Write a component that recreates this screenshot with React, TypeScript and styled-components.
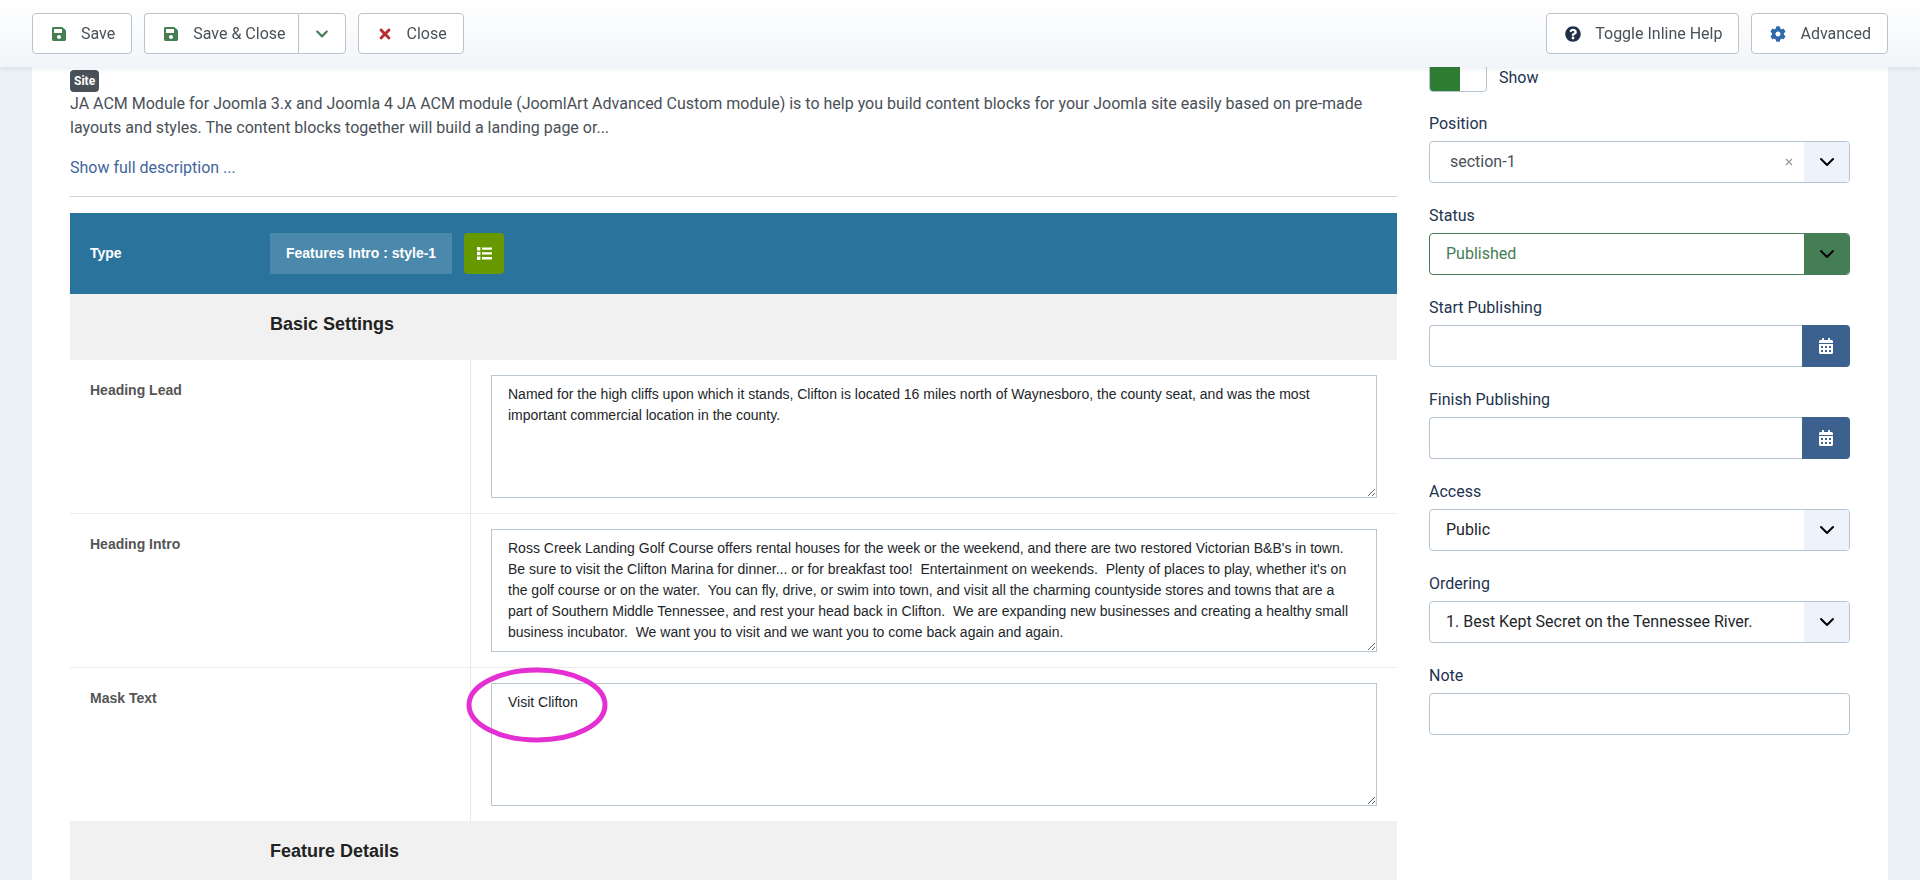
import React, { useId, useState } from "react";
import styled, { createGlobalStyle } from "styled-components";
import {
  FaCalendarAlt,
  FaChevronDown,
  FaCog,
  FaQuestionCircle,
  FaSave,
  FaTimes,
} from "react-icons/fa";

const color = {
  page: "#ebf1f6",
  text: "#495057",
  label: "#22334f",
  border: "#b6c5d3",
  buttonBorder: "#bcc3cb",
  success: "#457d54",
  danger: "#b92d30",
  primary: "#3d618f",
  link: "#3f659c",
};

const GlobalStyle = createGlobalStyle`
  *, *::before, *::after { box-sizing: border-box; }
  html { scrollbar-width: none; }
  body {
    margin: 0;
    background: ${color.page};
    color: ${color.text};
    font: 400 16px/24px Roboto, "Liberation Sans", sans-serif;
  }
  button, input, select, textarea { font: inherit; margin: 0; }
`;

/* Toolbar */

const Toolbar = styled.header`
  position: fixed;
  z-index: 10;
  top: 0;
  left: 0;
  right: 0;
  display: flex;
  gap: 12px;
  height: 67px;
  padding: 13px 32px;
  background: linear-gradient(#ffffff, #f2f5f9);
  box-shadow: 0 1px 6px rgba(40, 60, 90, 0.12);
`;

const Spacer = styled.div`
  flex: 1;
`;

const ToolButton = styled.button`
  display: flex;
  align-items: center;
  gap: 12px;
  padding: 0 16px;
  height: 41px;
  border: 1px solid ${color.buttonBorder};
  border-radius: 4px;
  background: #fff;
  color: ${color.text};
  white-space: nowrap;
`;

const IconSlot = styled.span<{ $tone: string }>`
  display: flex;
  justify-content: center;
  width: 20px;
  color: ${(p) => p.$tone};
`;

const SplitButton = styled.div`
  display: flex;

  ${ToolButton}:first-child {
    padding-right: 12px;
    border-right: 0;
    border-radius: 4px 0 0 4px;
  }
  ${ToolButton}:last-child {
    padding: 0 13px;
    border-radius: 0 4px 4px 0;
  }
`;

/* Page */

const Card = styled.main`
  display: grid;
  grid-template-columns: minmax(0, 1fr) minmax(280px, 421px);
  gap: 32px;
  min-height: 100vh;
  margin: 0 32px;
  padding: 64px 38px 0;
  background: #fff;
`;

const Content = styled.section`
  padding-top: 6px;
`;

const Badge = styled.span`
  display: block;
  width: fit-content;
  padding: 0 4px;
  border-radius: 4px;
  background: ${color.text};
  color: #fff;
  font-size: 12px;
  font-weight: 700;
  line-height: 22px;
`;

const Description = styled.p`
  margin: 0 0 16px;
`;

const DescriptionLink = styled.a`
  color: ${color.link};
  text-decoration: none;
`;

const Divider = styled.hr`
  margin: 16px 0;
  border: 0;
  border-top: 1px solid #d0d3d6;
`;

const ModuleForm = styled.form`
  font-family: "Liberation Sans", Arial, sans-serif;
  font-size: 14px;
  line-height: 21px;
`;

const TypeBar = styled.div`
  display: flex;
  align-items: center;
  height: 81px;
  padding: 0 20px;
  background: #2a739d;
  color: #fff;
  font-weight: 700;
`;

const TypeLabel = styled.span`
  width: 180px;
`;

const TypeValue = styled.span`
  padding: 10px 16px;
  margin-right: 12px;
  background: #4a88ac;
`;

const TypeButton = styled.button`
  display: flex;
  align-items: center;
  justify-content: center;
  width: 40px;
  height: 41px;
  padding: 0;
  border: 0;
  border-radius: 4px;
  background: #690;
  color: #fff;
`;

const SectionHeading = styled.h3`
  height: 66px;
  margin: 0;
  padding: 18px 0 0 200px;
  background: #f1f1f1;
  color: #222;
  font-size: 18px;
  line-height: 24px;
`;

const Row = styled.div`
  display: grid;
  grid-template-columns: 400px minmax(0, 1fr);

  & + & {
    border-top: 1px solid #ebebeb;
  }
`;

const RowLabel = styled.label`
  padding: 20px;
  color: #555;
  font-weight: 700;
`;

const RowField = styled.div`
  position: relative;
  display: flex;
  padding: 15px 20px;
  border-left: 1px solid #e8e8e8;
`;

const TextArea = styled.textarea`
  width: 100%;
  height: 123px;
  padding: 8px 16px;
  border: 1px solid #b9c6cf;
  border-radius: 0;
  background: #fff;
  color: #22262a;
  resize: both;
`;

const Marker = styled.svg`
  position: absolute;
  top: -1px;
  left: -5px;
  width: 142px;
  height: 76px;
  pointer-events: none;
`;

/* Sidebar */

const Sidebar = styled.aside`
  display: flex;
  flex-direction: column;
  gap: 21px;
  color: ${color.label};
`;

const SwitchLabel = styled.label`
  display: flex;
  align-items: center;
  gap: 12px;
  height: 28px;
`;

const Switch = styled.input`
  appearance: none;
  width: 58px;
  height: 28px;
  border: 1px solid ${color.border};
  border-radius: 4px;
  background: linear-gradient(#2f7d32, #2f7d32) right / 30px 100% no-repeat #fff;

  &:checked {
    background-position: left;
  }
`;

const Group = styled.div`
  display: flex;
  flex-direction: column;
  gap: 5px;

  ${SwitchLabel} + & {
    margin-top: -1px;
  }
`;

const ControlWrap = styled.div`
  position: relative;
  display: flex;
`;

const TextInput = styled.input`
  flex: 1;
  min-width: 0;
  height: 42px;
  padding: 0 16px;
  border: 1px solid ${color.border};
  border-radius: 4px;
  background: #fff;
  color: #22262a;
`;

const CalendarButton = styled.button`
  display: flex;
  align-items: center;
  justify-content: center;
  width: 48px;
  height: 42px;
  padding: 0;
  border: 0;
  border-radius: 0 4px 4px 0;
  background: ${color.primary};
  color: #fff;
`;

const DateWrap = styled(ControlWrap)`
  ${TextInput} {
    border-right: 0;
    border-radius: 4px 0 0 4px;
  }
`;

type Tone = "default" | "muted" | "success";

const Select = styled.select<{ $tone: Tone }>`
  appearance: none;
  width: 100%;
  height: 42px;
  padding: 0 60px 0 ${(p) => (p.$tone === "muted" ? 20 : 16)}px;
  border: 1px solid ${(p) => (p.$tone === "success" ? color.success : color.border)};
  border-radius: 4px;
  background: #fff;
  color: ${(p) =>
    ({ default: "#22262a", muted: color.text, success: color.success })[p.$tone]};
`;

const Arrow = styled.span<{ $tone: Tone }>`
  position: absolute;
  top: 1px;
  right: 1px;
  bottom: 1px;
  display: flex;
  align-items: center;
  justify-content: center;
  width: 45px;
  border-radius: 0 3px 3px 0;
  background: ${(p) => (p.$tone === "success" ? color.success : "#eef3fb")};
  pointer-events: none;
`;

const ClearButton = styled.button`
  position: absolute;
  top: 1px;
  right: 46px;
  bottom: 1px;
  display: flex;
  align-items: center;
  justify-content: center;
  width: 30px;
  padding: 0;
  border: 0;
  background: none;
`;

function SelectField(props: {
  label: string;
  options: string[];
  tone?: Tone;
  clearable?: boolean;
}) {
  const id = useId();
  const tone = props.tone ?? "default";
  const [value, setValue] = useState(props.options[0]);
  return (
    <Group>
      <label htmlFor={id}>{props.label}</label>
      <ControlWrap>
        <Select id={id} $tone={tone} value={value} onChange={(e) => setValue(e.target.value)}>
          {props.clearable && <option value="" />}
          {props.options.map((o) => (
            <option key={o}>{o}</option>
          ))}
        </Select>
        {props.clearable && (
          <ClearButton type="button" aria-label="Clear position" onClick={() => setValue("")}>
            <svg width="8" height="8" viewBox="0 0 8 8" stroke="#999" strokeWidth="1.2">
              <path d="M1 1l6 6M7 1l-6 6" />
            </svg>
          </ClearButton>
        )}
        <Arrow $tone={tone}>
          <svg width="16" height="10" viewBox="0 0 16 10" fill="none" stroke="#000" strokeWidth="2" strokeLinecap="round" strokeLinejoin="round">
            <path d="M2 2l6 6 6-6" />
          </svg>
        </Arrow>
      </ControlWrap>
    </Group>
  );
}

function DateField({ label }: { label: string }) {
  const id = useId();
  return (
    <Group>
      <label htmlFor={id}>{label}</label>
      <DateWrap>
        <TextInput id={id} type="text" />
        <CalendarButton type="button" aria-label={`Open calendar for ${label}`}>
          <FaCalendarAlt size={16} />
        </CalendarButton>
      </DateWrap>
    </Group>
  );
}

function TextRow(props: { label: string; text: string; marked?: boolean }) {
  const id = useId();
  return (
    <Row>
      <RowLabel htmlFor={id}>{props.label}</RowLabel>
      <RowField>
        <TextArea id={id} defaultValue={props.text} spellCheck={false} />
        {props.marked && (
          <Marker viewBox="0 0 142 76" fill="none" stroke="#e42fd3" strokeWidth="5" aria-hidden="true">
            <ellipse cx="71" cy="38" rx="68" ry="35" />
          </Marker>
        )}
      </RowField>
    </Row>
  );
}

function Tool(props: { icon: React.ReactNode; tone: string; children: string }) {
  return (
    <ToolButton type="button">
      <IconSlot $tone={props.tone}>{props.icon}</IconSlot>
      {props.children}
    </ToolButton>
  );
}

const headingLead =
  "Named for the high cliffs upon which it stands, Clifton is located 16 miles north of Waynesboro, the county seat, and was the most important commercial location in the county.";

const headingIntro =
  "Ross Creek Landing Golf Course offers rental houses for the week or the weekend, and there are two restored Victorian B&B's in town.  Be sure to visit the Clifton Marina for dinner... or for breakfast too!  Entertainment on weekends.  Plenty of places to play, whether it's on the golf course or on the water.  You can fly, drive, or swim into town, and visit all the charming countyside stores and towns that are a part of Southern Middle Tennessee, and rest your head back in Clifton.  We are expanding new businesses and creating a healthy small business incubator.  We want you to visit and we want you to come back again and again.";

export default function App() {
  return (
    <>
      <GlobalStyle />
      <Toolbar>
        <Tool icon={<FaSave size={16} />} tone={color.success}>Save</Tool>
        <SplitButton>
          <Tool icon={<FaSave size={16} />} tone={color.success}>{"Save & Close"}</Tool>
          <ToolButton type="button" aria-label="More save options">
            <IconSlot $tone={color.success}>
              <FaChevronDown size={14} />
            </IconSlot>
          </ToolButton>
        </SplitButton>
        <Tool icon={<FaTimes size={16} />} tone={color.danger}>Close</Tool>
        <Spacer />
        <Tool icon={<FaQuestionCircle size={16} />} tone="#1f2f47">Toggle Inline Help</Tool>
        <Tool icon={<FaCog size={16} />} tone="#2f69ad">Advanced</Tool>
      </Toolbar>
      <Card>
        <Content>
          <Badge>Site</Badge>
          <Description>
            JA ACM Module for Joomla 3.x and Joomla 4 JA ACM module (JoomlArt Advanced Custom
            module) is to help you build content blocks for your Joomla site easily based on
            pre-made layouts and styles. The content blocks together will build a landing page
            or...
          </Description>
          <DescriptionLink href="#description">Show full description ...</DescriptionLink>
          <Divider />
          <ModuleForm>
            <TypeBar>
              <TypeLabel>Type</TypeLabel>
              <TypeValue>Features Intro : style-1</TypeValue>
              <TypeButton type="button" aria-label="Choose type">
                <svg width="15" height="13" viewBox="0 0 15 13" fill="currentColor">
                  <path d="M0 0h3.4v3.4H0zM0 4.8h3.4v3.4H0zM0 9.6h3.4V13H0zM5 .4h10v2.4H5zM5 5.2h10v2.4H5zM5 10h10v2.4H5z" />
                </svg>
              </TypeButton>
            </TypeBar>
            <SectionHeading>Basic Settings</SectionHeading>
            <TextRow label="Heading Lead" text={headingLead} />
            <TextRow label="Heading Intro" text={headingIntro} />
            <TextRow label="Mask Text" text="Visit Clifton" marked />
            <SectionHeading>Feature Details</SectionHeading>
          </ModuleForm>
        </Content>
        <Sidebar>
          <SwitchLabel>
            <Switch type="checkbox" role="switch" defaultChecked />
            Show
          </SwitchLabel>
          <SelectField label="Position" options={["section-1"]} tone="muted" clearable />
          <SelectField label="Status" options={["Published"]} tone="success" />
          <DateField label="Start Publishing" />
          <DateField label="Finish Publishing" />
          <SelectField label="Access" options={["Public"]} />
          <SelectField label="Ordering" options={["1. Best Kept Secret on the Tennessee River."]} />
          <Group>
            <label htmlFor="note">Note</label>
            <ControlWrap>
              <TextInput id="note" type="text" />
            </ControlWrap>
          </Group>
        </Sidebar>
      </Card>
    </>
  );
}
